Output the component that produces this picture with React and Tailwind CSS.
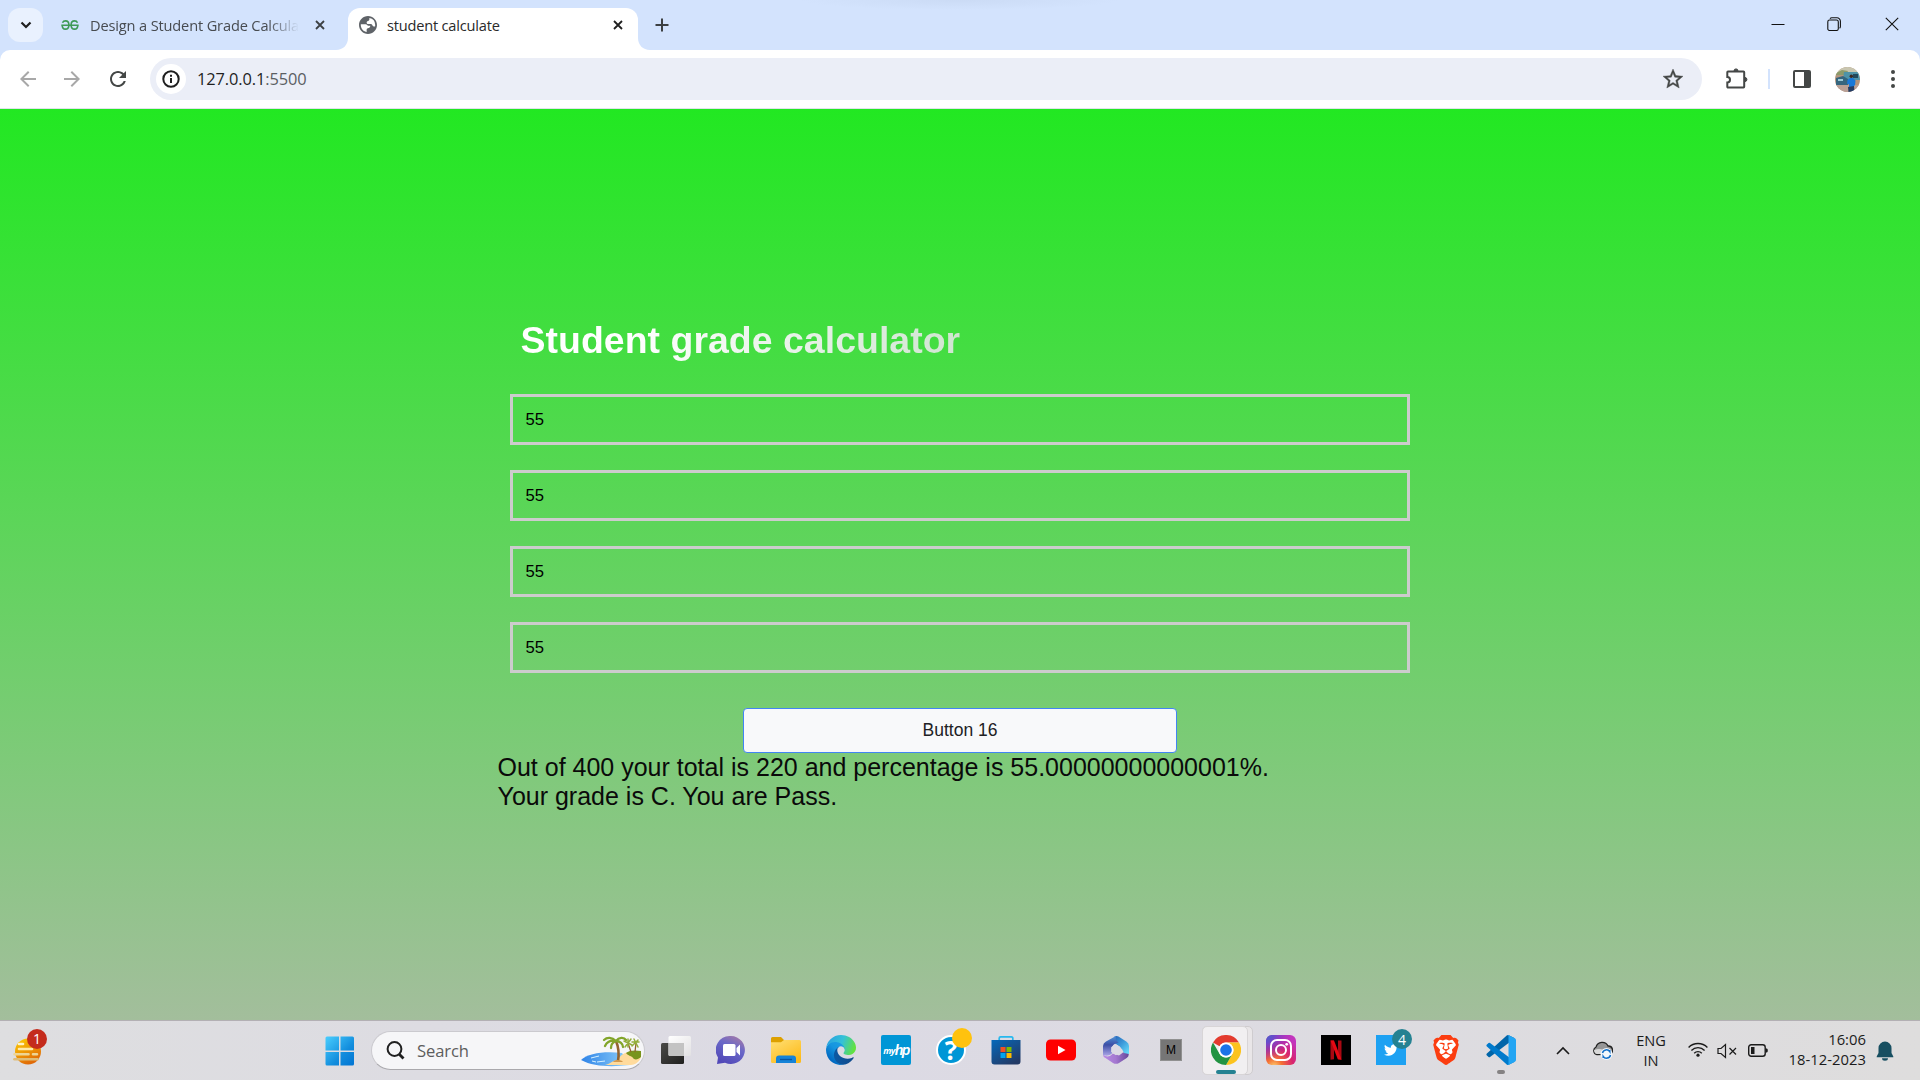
import React from "react";
import { SiBrave } from "react-icons/si";

const UI = "font-['Open_Sans','Noto_Sans',sans-serif]";

/* ---------- browser chrome ---------- */

function Cross({ className }) {
  return (
    <svg viewBox="0 0 10 10" className={`h-[10px] w-[10px] shrink-0 ${className}`} fill="none" stroke="currentColor" strokeWidth="1.8">
      <path d="M1 1l8 8M9 1l-8 8" />
    </svg>
  );
}

function TabStrip() {
  return (
    <div className="flex h-[50px] bg-[#d3e3fd] bg-[radial-gradient(ellipse_160px_10px_at_960px_0px,#cbdbf5,#d3e3fd)] pl-2">
      <div className="mt-2 flex h-[34px] w-[35px] items-center justify-center rounded-[12px] bg-[#e9f1fe]">
        <svg viewBox="0 0 12 8" className="h-[8px] w-[12px]" fill="none" stroke="#1f1f1f" strokeWidth="2.2">
          <path d="M1.5 1.5L6 6l4.500-4.500" />
        </svg>
      </div>
      <div className="flex h-[50px] w-[305px] items-center pl-[18px]">
        <svg viewBox="0 0 18 10" className="h-[10px] w-[18px] shrink-0" fill="none" stroke="#3f9a57" strokeWidth="1.6">
          <path d="M.3 5.200h17.400M1.500 2.800C2.200 1.200 3.500.9 4.500.9c2 0 3.400 1.800 3.400 4 0 2.400-1.400 4.200-3.500 4.200-1.900 0-3.200-1.500-3.200-3.900M16.500 2.800C15.800 1.200 14.500.9 13.500.9c-2 0-3.400 1.800-3.400 4 0 2.400 1.400 4.200 3.500 4.200 1.900 0 3.200-1.500 3.200-3.900" />
        </svg>
        <div className={`ml-[11px] h-[22px] w-[209px] whitespace-nowrap text-[14.6px] leading-[22px] tracking-[-0.15px] text-[#474b50] ${UI} [mask-image:linear-gradient(to_right,black_85%,transparent)]`}>
          Design a Student Grade Calcula
        </div>
        <Cross className="ml-4 text-[#3c4043]" />
      </div>
      <div className="relative mt-2 flex h-[42px] w-[290px] items-center rounded-t-[12px] bg-white pb-2 pl-[11px]">
        <svg viewBox="0 0 12 12" className="absolute -left-3 bottom-0 h-3 w-3"><path d="M12 0v12H0C7 12 12 7 12 0z" fill="#fff" /></svg>
        <svg viewBox="0 0 12 12" className="absolute -right-3 bottom-0 h-3 w-3"><path d="M0 0v12h12C5 12 0 7 0 0z" fill="#fff" /></svg>
        <svg viewBox="2 2 20 20" className="h-[18px] w-[18px] shrink-0" fill="#5f6368">
          <path d="M12 2C6.480 2 2 6.480 2 12s4.480 10 10 10 10-4.480 10-10S17.520 2 12 2zm-1 17.930c-3.950-.49-7-3.850-7-7.930 0-.3.02-.6.05-.9h5.450c1.400 0 1.700 1.300 2.800 1.700h2.200c0 2.100-1.200 2.400-2.700 2.700-.8.200-1.300.8-1.300 1.700v2.600zM13.500 4.150A8 8 0 0 1 20 12c0 .6-.07 1.200-.2 1.700h-1.500c-1.600 0-1.200-2.700-2.900-2.700h-3.200c-1.300 0-1.700-.9-1.700-1.800 0-1.700 3-1.200 3-3.200z" />
        </svg>
        <span className={`ml-[10px] w-[113px] whitespace-nowrap text-[14.600px] leading-[22px] tracking-[-0.2px] text-[#2a2a2a] ${UI}`}>student calculate</span>
        <Cross className="ml-[113px] text-[#1f1f1f]" />
      </div>
      <svg viewBox="0 0 14 14" className="ml-[17px] mt-[18px] h-[14px] w-[14px]" fill="none" stroke="#3c4043" strokeWidth="2"><path d="M7 .5v13M.5 7h13" /></svg>
      <div className="flex-1" />
      <div className="mt-[17px] flex h-[14px] items-center pr-[21px] text-[#111]">
        <svg viewBox="0 0 14 14" className="h-[14px] w-[14px]" stroke="currentColor"><path d="M.5 7.500h13" /></svg>
        <svg viewBox="0 0 14 14" className="ml-[42px] h-[14px] w-[14px]" fill="none" stroke="currentColor" strokeWidth="1.100">
          <rect x=".8" y="3" width="10.500" height="10.500" rx="1.800" />
          <path d="M3 1.700C3.500 1 4 .8 4.800.8H10a3.400 3.400 0 0 1 3.400 3.400v5.300c0 .8-.3 1.300-.8 1.700" />
        </svg>
        <svg viewBox="0 0 14 14" className="ml-[44px] h-[14px] w-[14px]" stroke="currentColor" strokeWidth="1.100"><path d="M.8.8l12.400 12.400M13.200.8L.8 13.200" /></svg>
      </div>
    </div>
  );
}

function Avatar() {
  return (
    <svg viewBox="0 0 25 25" className="ml-6 h-[25px] w-[25px] rounded-full">
      <rect width="25" height="25" fill="#b3947c" />
      <path d="M0 0h25v7H0z" fill="#c9c6b0" />
      <path d="M1 6l6-3 6 1-2 4H0z" fill="#8d9a6a" />
      <path d="M9 5h15l1 8H8z" fill="#4e93a8" />
      <path d="M1 11l7-2 5 3v6H1z" fill="#35657e" />
      <path d="M3 12h5v2H3z" fill="#9cc9d6" />
      <path d="M18 7h5v4h-5z" fill="#22495c" />
      <path d="M0 18h25v7H0z" fill="#b9a096" />
      <path d="M12.500 13l2.500-2h3l2.500 2.500-.5 5h-1v5h-5v-6l-2-1z" fill="#1878d8" />
      <path d="M13 20l6-1 .5 6h-6z" fill="#253d63" />
      <circle cx="16.300" cy="9.300" r="1.700" fill="#3d2922" />
    </svg>
  );
}

function Toolbar() {
  return (
    <div className="bg-[#d3e3fd]">
      <div className="flex h-[59px] items-center rounded-t-[10px] border-b border-[#dfe3ea] bg-white pl-[20px]">
        <svg viewBox="4 4 16 16" className="h-[16px] w-[16px]" fill="#a8a8a8"><path d="M20 11H7.830l5.590-5.590L12 4l-8 8 8 8 1.410-1.410L7.830 13H20v-2z" /></svg>
        <svg viewBox="4 4 16 16" className="ml-[28px] h-[16px] w-[16px]" fill="#a8a8a8"><path d="M12 4l-1.410 1.410L16.170 11H4v2h12.170l-5.580 5.590L12 20l8-8z" /></svg>
        <svg viewBox="4 4 16 16" className="ml-[30px] h-[16px] w-[16px]" fill="#444746"><path d="M17.650 6.350C16.200 4.900 14.210 4 12 4c-4.420 0-7.990 3.580-7.990 8s3.570 8 7.990 8c3.730 0 6.840-2.550 7.730-6h-2.080c-.82 2.330-3.040 4-5.650 4-3.310 0-6-2.690-6-6s2.690-6 6-6c1.660 0 3.140.69 4.220 1.780L13 11h7V4l-2.350 2.350z" /></svg>
        <div className="ml-[24px] flex h-[42px] w-[1552px] items-center rounded-full bg-[#ebeef7] pl-[6px] pr-[19px]">
          <div className="flex h-[30px] w-[30px] items-center justify-center rounded-full bg-white">
            <svg viewBox="0 0 18 18" className="h-[18px] w-[18px]" fill="none" stroke="#1f1f1f" strokeWidth="2"><circle cx="9" cy="9" r="7.700" /><path d="M9 8v5M9 4.800v2" /></svg>
          </div>
          <span className={`ml-[11px] mt-px text-[16.400px] tracking-[-0.1px] text-[#1f1f1f] ${UI}`}>127.0.0.1<span className="text-[#5b5e63]">:5500</span></span>
          <div className="flex-1" />
          <svg viewBox="2 2 20 20" className="h-[20px] w-[20px]" fill="#444746" stroke="#444746" strokeWidth=".4"><path d="M22 9.240l-7.190-.62L12 2 9.190 8.630 2 9.240l5.460 4.730L5.820 21 12 17.270 18.180 21l-1.630-7.030L22 9.240zM12 15.400l-3.760 2.270 1-4.280-3.320-2.880 4.380-.38L12 6.100l1.710 4.040 4.380.38-3.320 2.880 1 4.280L12 15.400z" /></svg>
        </div>
        <svg viewBox="0 0 22 22" className="ml-[24px] h-[22px] w-[22px]" fill="none" stroke="#444746" strokeWidth="2">
          <path d="M2.500 3.500h15a.7.7 0 0 1 .7.7v14.600a.7.7 0 0 1-.7.700H2a.7.7 0 0 1-.7-.7v-4.300c3.600 0 3.600-5.500 0-5.500V4.200a.7.7 0 0 1 .7-.7z" />
          <path d="M8 2.800a2 1.900 0 0 1 4 0zM19 9.500a1.900 2 0 0 1 0 4z" fill="#444746" stroke="#444746" strokeWidth="1" />
        </svg>
        <div className="ml-[20px] h-[20px] w-[2px] bg-[#d3e3fd]" />
        <div className="ml-[23px] h-[18px] w-[18px] rounded-[2px] border-2 border-r-[7px] border-[#444746]" />
        <Avatar />
        <div className="ml-[31px] flex flex-col gap-[3px]">
          <i className="h-1 w-1 rounded-full bg-[#444746]" /><i className="h-1 w-1 rounded-full bg-[#444746]" /><i className="h-1 w-1 rounded-full bg-[#444746]" />
        </div>
      </div>
    </div>
  );
}

/* ---------- page ---------- */

function Page() {
  return (
    <main className="flex h-[911px] flex-col bg-[linear-gradient(to_bottom,#22e822,#a3be9c)] px-[498px] font-['Liberation_Sans',Arial,sans-serif]">
      <h1 className="ml-[22.500px] mt-[210px] w-[445px] whitespace-nowrap bg-[linear-gradient(to_right,#fff_25%,#cfe4d0)] bg-clip-text text-[37.500px] font-bold leading-[43px] text-transparent">Student grade calculator</h1>
      <div className="mt-[32px] flex flex-col gap-[25px] px-3">
        {[0, 1, 2, 3].map((n) => (
          <input key={n} defaultValue="55" className="h-[51px] w-[900px] border-[3px] border-[#ccc] bg-transparent px-[12.500px] text-[16.670px] text-black outline-none" />
        ))}
      </div>
      <button className="mx-auto mt-[35px] h-[45px] w-[434px] rounded-[4px] border border-[#4285f4] bg-[#f8f9fa] pb-px text-[17.500px] text-[#202124]">Button 16</button>
      <p className="-ml-[0.500px] whitespace-nowrap text-[25px] leading-[29px] text-[#0a0a0a]">
        Out of 400 your total is 220 and percentage is 55.00000000000001%.<br />Your grade is C. You are Pass.
      </p>
    </main>
  );
}

/* ---------- taskbar ---------- */

function Weather() {
  return (
    <div className="relative ml-[12px] h-[36px] w-[36px]">
      <svg viewBox="0 0 36 36" className="h-[36px] w-[36px]">
        <defs><linearGradient id="sun" x1="0" y1="0" x2=".5" y2="1"><stop offset="0" stopColor="#ffd000" /><stop offset="1" stopColor="#e06a08" /></linearGradient></defs>
        <circle cx="16" cy="18.500" r="13" fill="url(#sun)" />
        <g strokeLinecap="round" strokeWidth="2.600"><path d="M7 11h4" stroke="#fff3c4" /><path d="M7 16h13" stroke="#ffe9a8" /><path d="M2.500 21.200h14M21 21.200h4" stroke="#edd595" /><path d="M2.500 26.200h23" stroke="#dfbd78" /></g>
      </svg>
      <span className={`absolute -top-[4px] left-[15px] flex h-[20px] w-[20px] items-center justify-center rounded-full bg-[#c42b1c] text-[14px] text-white ${UI}`}>1</span>
    </div>
  );
}

function WindowsLogo() {
  return (
    <svg viewBox="0 0 30 30" className="h-[30px] w-[30px]">
      <defs><linearGradient id="win" x1="0" y1="0" x2="30" y2="30" gradientUnits="userSpaceOnUse"><stop stopColor="#4cd0ff" /><stop offset=".6" stopColor="#128ddd" /><stop offset="1" stopColor="#0072d2" /></linearGradient></defs>
      <path d="M2 .5h12v14H.5V2A1.500 1.500 0 0 1 2 .5zM15.500.5h12A1.500 1.500 0 0 1 29 2v12.500H15.500zM.5 16H14v13.500H2A1.500 1.500 0 0 1 .5 28zM15.500 16H29v12a1.500 1.500 0 0 1-1.500 1.500h-12z" fill="url(#win)" />
    </svg>
  );
}

function Beach() {
  return (
    <svg viewBox="0 0 62 32" className="mt-[3px] h-[32px] w-[62px]">
      <defs><linearGradient id="sea"><stop stopColor="#2f84e8" /><stop offset="1" stopColor="#8fd0fa" /></linearGradient></defs>
      <path d="M1 24C8 17 25 15 42 17l8 12c-18 2-36 2-49-5z" fill="url(#sea)" />
      <path d="M25 29c5-1 7-4 12-5 3-3 5-7 12-8h12c1 6-2 12-10 13z" fill="#ffdb9d" />
      <path d="M46 17c3-3 10-3 15-2v6c-3 3-7 3-8 1s-5-2-7-5z" fill="#78941d" />
      <g fill="none" stroke="#93632f" strokeWidth="2"><path d="M36 5c3 7 3 14 2 20" strokeWidth="2.600" /><path d="M48 7l3 9M56 7l-1 9" strokeWidth="1.300" /></g>
      <g fill="none" stroke="#82a52a" strokeWidth="2.300" strokeLinecap="round"><path d="M36 5c-4-4-9-4-12-1M36 5c-5-1-9 1-11 5M36 5c-3 1-5 4-5 7M36 5c3-4 8-4 10-1M36 5c4 0 7 3 7 6" /></g>
      <g fill="none" stroke="#94ad3a" strokeWidth="1.500" strokeLinecap="round"><path d="M44 5l8 4M51 3l-6 8M48 3v8M52 6h7M54 3l4 8M58 4l-6 6" /></g>
      <path d="M11 22l8-2M17 26l8-1M12 25l4 1" stroke="#d7f1ff" strokeWidth="1" />
      <path d="M33 26c2-3 9-2 10 0z" fill="#d39a4f" />
    </svg>
  );
}

function TaskView() {
  return (
    <svg viewBox="0 0 30 30" className="h-[30px] w-[30px]">
      <defs>
        <linearGradient id="tv1" x2="1" y2="1"><stop stopColor="#4a4a48" /><stop offset="1" stopColor="#20201f" /></linearGradient>
        <linearGradient id="tv2" x2="1" y2="1"><stop stopColor="#fff" /><stop offset="1" stopColor="#e2e1e3" /></linearGradient>
      </defs>
      <rect x="0" y="8" width="23" height="21" rx="1.500" fill="url(#tv1)" />
      <rect x="7.500" y="1" width="22.500" height="20" rx="1.500" fill="url(#tv2)" />
      <path d="M7.500 8H23v13H9a1.500 1.500 0 0 1-1.500-1.500z" fill="#c3c3c3" />
    </svg>
  );
}

function Teams() {
  return (
    <svg viewBox="0 0 30 30" className="h-[30px] w-[30px]">
      <defs><linearGradient id="tm" x1=".8" y1="0" x2=".3" y2="1"><stop stopColor="#a57aa7" /><stop offset=".4" stopColor="#6a68c8" /><stop offset="1" stopColor="#5148b8" /></linearGradient></defs>
      <path d="M15 1a14 14 0 1 1-6 26.700L1 29l1-6.500A14 14 0 0 1 15 1z" fill="url(#tm)" />
      <rect x="7" y="9" width="12.500" height="12" rx="1.500" fill="#fff" /><path d="M20.500 13l3.500-3.500v11L20.500 17z" fill="#fff" />
    </svg>
  );
}

function Explorer() {
  return (
    <svg viewBox="0 0 30 30" className="h-[30px] w-[30px]">
      <defs><linearGradient id="fo" x2=".7" y2="1"><stop stopColor="#ffdf75" /><stop offset="1" stopColor="#fdbb1b" /></linearGradient></defs>
      <path d="M0 3.500A1.500 1.500 0 0 1 1.500 2H10l3 3h5v6H0z" fill="#dda000" />
      <path d="M0 7.200h10L13 5h15.500A1.500 1.500 0 0 1 30 6.500v20a1.500 1.500 0 0 1-1.500 1.500h-27A1.500 1.500 0 0 1 0 26.500z" fill="url(#fo)" />
      <path d="M5 28v-4.500a3 3 0 0 1 3-3h14a3 3 0 0 1 3 3V28z" fill="#1583d8" />
      <path d="M9 24.500h12" stroke="#0755a3" strokeWidth="1.300" />
    </svg>
  );
}

function Edge() {
  return (
    <svg viewBox="0 0 256 256" className="h-[30px] w-[30px]">
      <defs>
        <linearGradient id="ed1" x1="63" y1="177" x2="241" y2="177" gradientUnits="userSpaceOnUse"><stop stopColor="#0c59a4" /><stop offset="1" stopColor="#114a8b" /></linearGradient>
        <linearGradient id="ed2" x1="157" y1="100" x2="46" y2="222" gradientUnits="userSpaceOnUse"><stop stopColor="#1b9de2" /><stop offset=".4" stopColor="#1595df" /><stop offset="1" stopColor="#0067c0" /></linearGradient>
        <linearGradient id="ed3" x1="20" y1="40" x2="240" y2="120" gradientUnits="userSpaceOnUse"><stop stopColor="#2aa5df" /><stop offset=".5" stopColor="#35c1d8" /><stop offset="1" stopColor="#63e23f" /></linearGradient>
      </defs>
      <path fill="url(#ed1)" d="M231 190.500c-3.400 1.800-6.900 3.400-10.500 4.700a101.900 101.900 0 0 1-35.900 6.500c-47.300 0-88.500-32.500-88.500-74.300a31.500 31.500 0 0 1 16.400-27.300c-42.800 1.800-53.800 46.400-53.800 72.500 0 73.900 68.100 81.400 82.800 81.400 7.900 0 19.800-2.300 27-4.600l1.300-.4a128.300 128.300 0 0 0 66.600-52.800 4 4 0 0 0-5.400-5.700z" />
      <path fill="url(#ed2)" d="M105.700 241.400a79.200 79.200 0 0 1-22.700-21.300 80.700 80.700 0 0 1 29.500-120c3.200-1.500 8.500-4.100 15.600-4a32.400 32.400 0 0 1 25.700 13 31.900 31.900 0 0 1 6.300 18.700c0-.2 24.500-79.600-80-79.600-43.900 0-80 41.700-80 78.200a130.200 130.200 0 0 0 12.100 56 128 128 0 0 0 156.400 67 75.600 75.600 0 0 1-62.800-8z" />
      <path fill="url(#ed3)" d="M152.300 148.900c-.8 1-3.300 2.500-3.300 5.700 0 2.600 1.700 5.100 4.700 7.200 14.400 10 41.500 8.700 41.600 8.700a59.600 59.600 0 0 0 30.300-8.300 61.400 61.400 0 0 0 30.400-52.900c.3-22.400-8-37.300-11.300-43.900C223.500 23.900 177.700 0 128 0A128 128 0 0 0 0 126.200c.5-36.500 36.800-66 80-66 3.500 0 23.500.3 42 10 16.300 8.600 24.900 19 30.800 29.200 6.200 10.700 7.300 24.100 7.300 29.500s-2.700 13.300-7.800 19.900z" />
    </svg>
  );
}

function MyHp() {
  return (
    <div className="flex h-[30px] w-[30px] items-center justify-center rounded-[2px] bg-[#0096d6] italic leading-none text-white">
      <span className="font-['Open_Sans',sans-serif] text-[9px] font-bold tracking-[-0.6px]">my</span>
      <span className="font-['Liberation_Sans_Narrow','Liberation_Sans',sans-serif] text-[14px] font-bold tracking-[-1.500px]">hp</span>
    </div>
  );
}

function Help() {
  return (
    <div className="relative h-[30px] w-[30px]">
      <div className="flex h-[30px] w-[30px] items-center justify-center rounded-full border-2 border-white bg-[#0096d6] font-['Open_Sans',sans-serif] text-[26px] font-bold leading-none text-white">?</div>
      <div className="absolute -top-[7px] left-[16px] h-[20px] w-[20px] rounded-full bg-[#ffc20e]" />
    </div>
  );
}

function Store() {
  return (
    <svg viewBox="0 0 30 30" className="h-[30px] w-[30px]">
      <defs><linearGradient id="st" x2=".7" y2="1"><stop stopColor="#0669bb" /><stop offset="1" stopColor="#233a66" /></linearGradient></defs>
      <path d="M8.200 6V3.200A1.400 1.400 0 0 1 9.600 1.800h10.800a1.400 1.400 0 0 1 1.400 1.400V6" fill="none" stroke="#28b8ee" strokeWidth="1.700" />
      <path d="M.5 5h29v21.500a3 3 0 0 1-3 3h-23a3 3 0 0 1-3-3z" fill="url(#st)" />
      <path d="M9.500 12h5v5h-5z" fill="#f25022" /><path d="M15.500 12h5v5h-5z" fill="#7fba00" /><path d="M9.500 18h5v5h-5z" fill="#00a4ef" /><path d="M15.500 18h5v5h-5z" fill="#ffb900" />
    </svg>
  );
}

function YouTube() {
  return (
    <svg viewBox="0 0 30 30" className="h-[30px] w-[30px]"><rect y="4.500" width="30" height="21" rx="4.500" fill="#f00" /><path d="M12 10.800l7.500 4.200-7.500 4.200z" fill="#fff" /></svg>
  );
}

function Office() {
  return (
    <svg viewBox="0 0 30 30" className="h-[30px] w-[30px]">
      <defs>
        <linearGradient id="of1" x1="0" y1="0" x2="0" y2="1"><stop stopColor="#4f94d8" /><stop offset=".45" stopColor="#3d4fa6" /><stop offset="1" stopColor="#a9a4e6" /></linearGradient>
        <linearGradient id="of2" x1="0" y1="0" x2=".9" y2="1"><stop stopColor="#2763b8" /><stop offset=".5" stopColor="#3d9ada" /><stop offset="1" stopColor="#66dcfa" /></linearGradient>
        <linearGradient id="of3" x1="0" y1="0" x2="1" y2="0"><stop stopColor="#b98be6" /><stop offset=".5" stopColor="#a478d0" /><stop offset="1" stopColor="#65489a" /></linearGradient>
      </defs>
      <path d="M2 19.500q5 4.500 10-1l6 2 4-3 5.700-1v3.300q0 2-2 3.200l-7.700 5q-3 1.700-6 0l-7.500-5Q2 22 2 19.500z" fill="url(#of3)" />
      <path d="M13 2q2-1.400 4.500-.6l7.800 5Q28 8 28 11v8l-5-1-2-4-6-4.500q-3-3-2-7.500z" fill="url(#of2)" />
      <path d="M15 1L5 6.500Q2 8.200 2 11v9q6 2 9.500-2V12q0-2 2-3l4-1.500q-4-3-2.500-6.500z" fill="url(#of1)" />
      <path d="M14.900 9.600l4.200 2.600v4.900l-4.200 2.600-4.200-2.600v-4.900z" fill="#dcdae4" stroke="#dcdae4" strokeWidth="1" strokeLinejoin="round" />
    </svg>
  );
}

function Chrome() {
  return (
    <svg viewBox="0 0 48 48" className="h-[30px] w-[30px]">
      <path d="M3.200 12A24 24 0 0 1 44.800 12H24a12 12 0 0 0-10.400 6z" fill="#e33b2e" />
      <path d="M44.800 12A24 24 0 0 1 24 48l10.400-18A12 12 0 0 0 24 12z" fill="#fcc31e" />
      <path d="M24 48A24 24 0 0 1 3.200 12l10.400 18A12 12 0 0 0 34.400 30z" fill="#229342" />
      <circle cx="24" cy="24" r="12" fill="#fff" /><circle cx="24" cy="24" r="9.300" fill="#1a73e8" />
    </svg>
  );
}

function Instagram() {
  return (
    <svg viewBox="0 0 30 30" className="h-[30px] w-[30px]">
      <defs>
        <radialGradient id="ig1" cx=".27" cy="1.070" r="1.050"><stop stopColor="#fed576" /><stop offset=".26" stopColor="#f47133" /><stop offset=".61" stopColor="#d8246f" /><stop offset="1" stopColor="#c235bd" /></radialGradient>
        <radialGradient id="ig2" cx="0" cy="0" r=".85"><stop stopColor="#4168c9" /><stop offset=".3" stopColor="#6a4acb" /><stop offset="1" stopColor="#962fbf" stopOpacity="0" /></radialGradient>
      </defs>
      <rect width="30" height="30" rx="6" fill="url(#ig1)" /><rect width="30" height="30" rx="6" fill="url(#ig2)" />
      <g fill="none" stroke="#fff" strokeWidth="2"><rect x="5" y="5" width="20" height="20" rx="6" /><circle cx="15" cy="15" r="5" /></g><circle cx="20.700" cy="9.300" r="1.400" fill="#fff" />
    </svg>
  );
}

function Netflix() {
  return (
    <svg viewBox="0 0 30 30" className="h-[30px] w-[30px]"><path d="M0 0h30v30H0z" /><path d="M9.500 5.500H13v18.700l-3.500.5zM17 5.500h3.500v19.200l-3.500-.5z" fill="#a90812" /><path d="M9.500 5.500H13l7.500 19.200-3.700-.5z" fill="#e50914" /></svg>
  );
}

function Twitter() {
  return (
    <div className="relative flex h-[30px] w-[30px] items-center justify-center bg-[#1da1f2]">
      <svg viewBox="0 0 24 24" className="h-[14px] w-[14px]" fill="#fff"><path d="M23.950 4.570a10 10 0 0 1-2.820.77 4.960 4.960 0 0 0 2.160-2.720c-.95.55-2 .96-3.130 1.180a4.920 4.920 0 0 0-8.380 4.480C7.690 8.090 4.070 6.130 1.640 3.160a4.820 4.820 0 0 0-.67 2.480c0 1.710.87 3.210 2.190 4.100a4.900 4.900 0 0 1-2.230-.62v.06a4.920 4.920 0 0 0 3.950 4.830 5 5 0 0 1-2.210.08 4.940 4.940 0 0 0 4.600 3.420A9.870 9.870 0 0 1 0 19.540a14 14 0 0 0 7.550 2.210c9.050 0 14-7.500 14-13.980 0-.21 0-.42-.02-.63a9.940 9.940 0 0 0 2.460-2.550z" /></svg>
      <span className={`absolute -top-[6px] left-[16px] flex h-[20px] w-[20px] items-center justify-center rounded-full bg-[#258292] text-[14px] text-white ${UI}`}>4</span>
    </div>
  );
}

function Brave() {
  return (
    <div className="relative h-[30px] w-[30px]">
      <svg viewBox="0 0 30 30" className="h-[30px] w-[30px]"><path d="M7 4h16l2.500 6L21 23l-6 4-6-4L4.500 10z" fill="#fff" /></svg>
      <SiBrave className="absolute inset-0 h-[30px] w-[30px] text-[#fb3d10]" />
    </div>
  );
}

function VsCode() {
  return (
    <svg viewBox="0 0 100 100" className="h-[30px] w-[30px]">
      <path d="M96 11L76 1a6 6 0 0 0-7 1L3 62a4 4 0 0 0 0 6l5.500 5a4 4 0 0 0 5 .2L93 13q7-5 3-2z" fill="#0065a9" />
      <path d="M96 89L76 99a6 6 0 0 1-7-1L3 38a4 4 0 0 1 0-6l5.500-5a4 4 0 0 1 5-.2L93 87q7 5 3 2z" fill="#007acc" />
      <path d="M76 99a6 6 0 0 1-7-1c2.300 2.300 6 .7 6-2.500v-91C75 1.200 71.300-.5 69 2a6 6 0 0 1 7-1l20 9.800a6 6 0 0 1 4 5.700v67a6 6 0 0 1-4 5.700z" fill="#23a5f3" />
    </svg>
  );
}

function Tray() {
  return (
    <div className="flex h-[59px] items-center text-[#1b1b1b]">
      <svg viewBox="0 0 14 9" className="h-[9px] w-[14px]" fill="none" stroke="currentColor" strokeWidth="1.600"><path d="M1 8l6-6 6 6" /></svg>
      <svg viewBox="0 0 21 19" className="ml-[22px] h-[19px] w-[21px]">
        <path d="M5 13.500A4 4 0 0 1 4 6 6.500 6.500 0 0 1 16 5a4.300 4.300 0 0 1 2.500 8z" fill="#969697" stroke="#222" strokeWidth="1.300" />
        <path d="M2 9c6-2 9-1 15 4H5c-2 0-3-2-3-4z" fill="#d9d9d9" />
        <circle cx="14.500" cy="13" r="6" fill="#f4f8fc" />
        <path d="M10.500 12a4 4 0 0 1 7.300-1.300V9M18.500 14a4 4 0 0 1-7.300 1.300V17" fill="none" stroke="#1470c8" strokeWidth="1.500" />
      </svg>
      <div className={`-mt-[2px] ml-[22px] w-[32px] whitespace-nowrap text-center text-[14.600px] leading-[20px] tracking-[-0.1px] ${UI}`}>ENG<br />IN</div>
      <svg viewBox="0 0 20 15" className="-mt-[2px] ml-[21px] h-[15px] w-[20px]" fill="none" stroke="currentColor" strokeWidth="1.400"><path d="M.6 5.500a13.200 13.200 0 0 1 18.800 0M3.400 8.400a9.300 9.300 0 0 1 13.200 0M6.200 11.200a5.400 5.400 0 0 1 7.600 0" /><circle cx="10" cy="13.200" r="1.600" fill="currentColor" stroke="none" /></svg>
      <svg viewBox="0 0 20 16" className="ml-[9px] h-[16px] w-[20px]" fill="none" stroke="currentColor" strokeWidth="1.200"><path d="M1 5.500h3l4.500-4v13L4 10.500H1z" /><path d="M12.500 5l6.500 6.500M19 5l-6.500 6.500" /></svg>
      <svg viewBox="0 0 20 13" className="ml-[11px] h-[13px] w-[20px]"><rect x=".7" y=".7" width="16.500" height="11.500" rx="2.500" fill="none" stroke="currentColor" strokeWidth="1.400" /><path d="M3 3h3.500v7H3zM17.500 4.500h1.300q1 0 1 2t-1 2h-1.300z" fill="currentColor" /></svg>
      <div className={`-mt-[4px] ml-[18px] w-[80px] whitespace-nowrap text-right text-[14.800px] leading-[20px] tracking-[0.02px] ${UI}`}>16:06<br />18-12-2023</div>
      <svg viewBox="0 0 18 20" className="ml-[10px] mr-[26px] h-[20px] w-[18px]" fill="#174f61"><path d="M9 .5a6.500 6.500 0 0 1 6.500 6.500v5l1.800 3.500v.7H.7v-.7L2.500 12V7A6.500 6.500 0 0 1 9 .5zM6 17.200h6a3 2.500 0 0 1-6 0z" /></svg>
    </div>
  );
}

function Taskbar() {
  return (
    <footer className="flex h-[60px] items-center border-t border-[#b3b0b4] bg-linear-to-r from-[#dedee0] via-[#dcdae4] via-45% to-[#dedddd]">
      <Weather />
      <div className="ml-[276.500px]"><WindowsLogo /></div>
      <div className="ml-[16.500px] flex h-[39px] w-[274px] items-center rounded-full border border-[#cbcacf] border-b-[#aaa9ad] bg-[#f6f6f8] pl-[14px] pr-[2px]">
        <svg viewBox="0 0 19 19" className="h-[19px] w-[19px]" fill="none" stroke="#202020" strokeWidth="2"><circle cx="8.500" cy="8" r="6.900" /><path d="M13 13l4.500 4.500" strokeWidth="2.800" /></svg>
        <span className={`ml-[12px] mt-px flex-1 text-[16.600px] tracking-[-0.1px] text-[#5d5d5d] ${UI}`}>Search</span>
        <Beach />
      </div>
      <div className="-mt-px ml-[16px] flex items-center gap-[25px]">
        <TaskView /><Teams /><Explorer /><Edge /><MyHp /><Help /><Store /><YouTube /><Office />
        <div className="mx-[4px] flex h-[22px] w-[22px] items-center justify-center border border-[#909090] bg-[#767676] font-['Liberation_Sans',sans-serif] text-[12px] text-black">M</div>
        <div className="relative h-[30px] w-[30px]">
          <div className="absolute -left-[9px] -top-[9px] h-[49px] w-[51px] rounded-[5px] border border-[#cfcccf] bg-[#e9e6e8]" />
          <div className="absolute -left-[9px] -top-[9px] h-[49px] w-[46px] rounded-[5px] border border-[#d8d5d7] bg-[#f1eff1]" />
          <div className="relative"><Chrome /></div>
          <div className="absolute left-[5px] top-[35px] h-[4px] w-[20px] rounded-full bg-[#258292]" />
        </div>
        <Instagram /><Netflix /><Twitter /><Brave />
        <div className="relative"><VsCode /><div className="absolute left-[11px] top-[35px] h-[4px] w-[8px] rounded-full bg-[#858283]" /></div>
      </div>
      <div className="flex-1" />
      <Tray />
    </footer>
  );
}

export default function App() {
  return (
    <div className="flex h-[1080px] w-[1920px] flex-col overflow-hidden">
      <TabStrip />
      <Toolbar />
      <Page />
      <Taskbar />
    </div>
  );
}
